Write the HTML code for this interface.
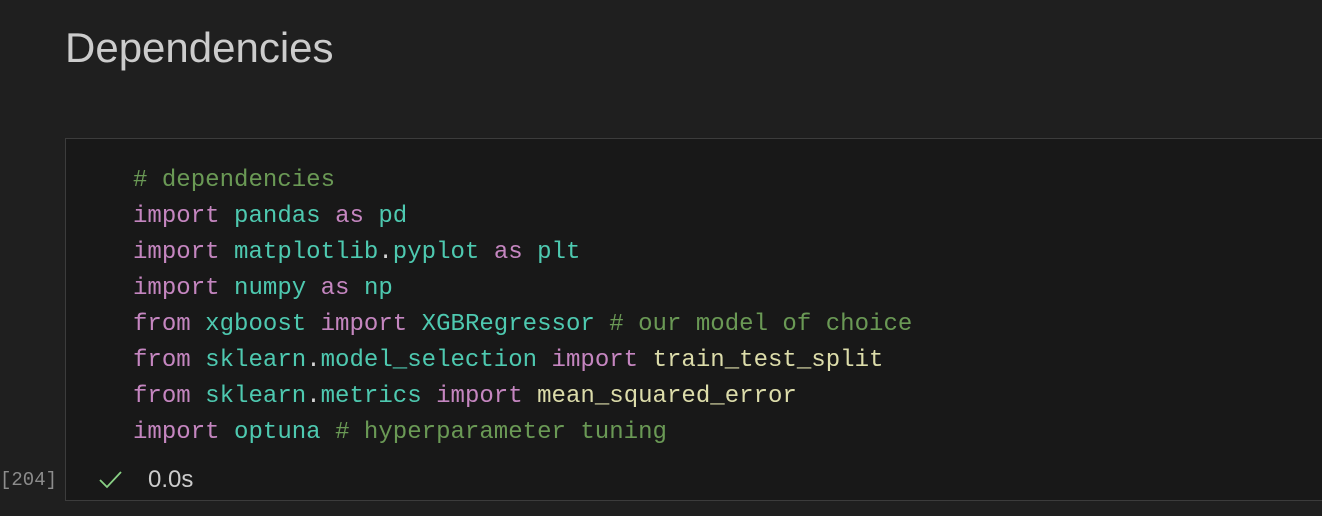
<!DOCTYPE html>
<html><head><style>
body{margin:0;width:1322px;height:516px;background:#1f1f1f;overflow:hidden;position:relative;font-family:"Liberation Sans",sans-serif}
h1{position:absolute;left:65px;top:22px;margin:0;font-weight:normal;font-size:42px;color:#cccccc;line-height:52px}
.cell{position:absolute;left:65px;top:138px;width:1270px;height:363px;background:#181818;border:1px solid #3c3c3c;box-sizing:border-box}
pre{position:absolute;left:133px;top:163px;margin:0;font-family:"Liberation Mono",monospace;font-size:24.05px;line-height:36px;color:#d4d4d4}
.c{color:#6a9955}.k{color:#c586c0}.m{color:#4ec9b0}.f{color:#dcdcaa}
.num{position:absolute;left:0;top:466px;font-family:"Liberation Mono",monospace;font-size:19px;color:#8c8c8c;line-height:28px}
.ck{position:absolute;left:99px;top:470px}
.t{position:absolute;left:148px;top:466px;color:#cccccc;font-size:24px;line-height:28px}
</style></head><body>
<h1>Dependencies</h1>
<div class="cell"></div>
<pre><span class="c"># dependencies</span>
<span class="k">import</span> <span class="m">pandas</span> <span class="k">as</span> <span class="m">pd</span>
<span class="k">import</span> <span class="m">matplotlib</span>.<span class="m">pyplot</span> <span class="k">as</span> <span class="m">plt</span>
<span class="k">import</span> <span class="m">numpy</span> <span class="k">as</span> <span class="m">np</span>
<span class="k">from</span> <span class="m">xgboost</span> <span class="k">import</span> <span class="m">XGBRegressor</span> <span class="c"># our model of choice</span>
<span class="k">from</span> <span class="m">sklearn</span>.<span class="m">model_selection</span> <span class="k">import</span> <span class="f">train_test_split</span>
<span class="k">from</span> <span class="m">sklearn</span>.<span class="m">metrics</span> <span class="k">import</span> <span class="f">mean_squared_error</span>
<span class="k">import</span> <span class="m">optuna</span> <span class="c"># hyperparameter tuning</span></pre>
<div class="num">[204]</div>
<svg class="ck" width="24" height="20" viewBox="0 0 24 20"><path d="M1 10 L8 17 L22 2" fill="none" stroke="#89d185" stroke-width="1.8"/></svg>
<div class="t">0.0s</div>
</body></html>
